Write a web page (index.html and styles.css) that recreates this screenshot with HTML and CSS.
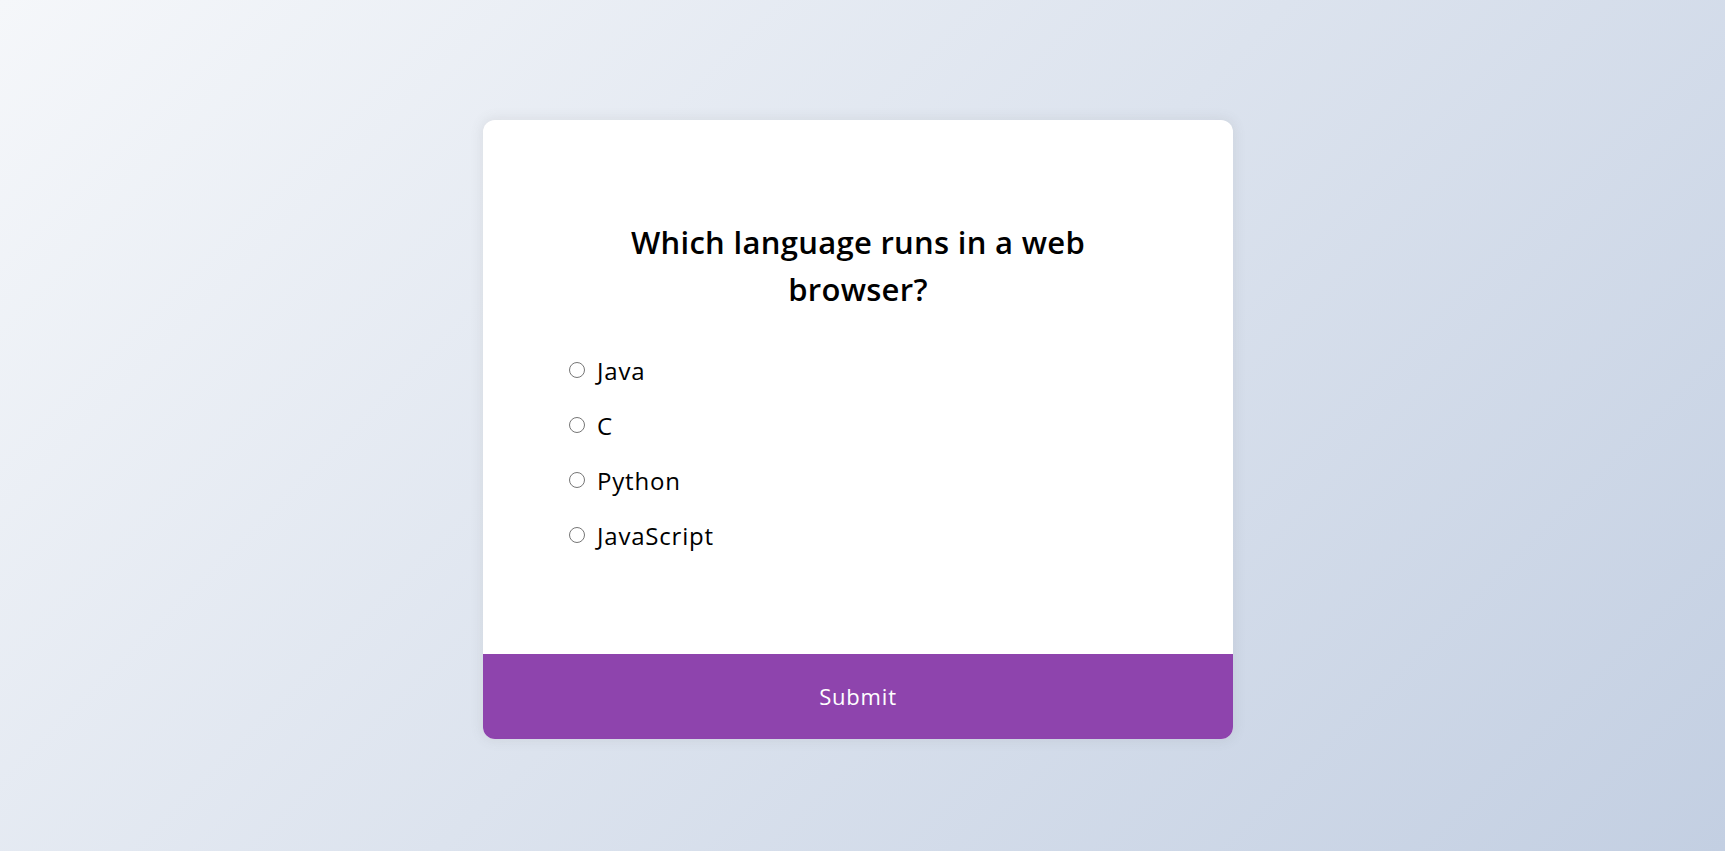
FILE: index.html
```html
<!DOCTYPE html>
<html lang="en">
<head>
<meta charset="utf-8">
<title>Quiz</title>
<link rel="stylesheet" href="styles.css">
</head>
<body>
  <div class="quiz-container">
    <div class="quiz-header">
      <h2 class="question">Which language runs in a web browser?</h2>
      <ul class="answers">
        <li class="answer"><input type="radio" name="answer" id="a" class="radio"><label for="a">Java</label></li>
        <li class="answer"><input type="radio" name="answer" id="b" class="radio"><label for="b">C</label></li>
        <li class="answer"><input type="radio" name="answer" id="c" class="radio"><label for="c">Python</label></li>
        <li class="answer"><input type="radio" name="answer" id="d" class="radio"><label for="d">JavaScript</label></li>
      </ul>
    </div>
    <button class="submit">Submit</button>
  </div>
</body>
</html>
```
FILE: styles.css
```css
* { box-sizing: border-box; }

html, body { height: 100%; }

body {
  margin: 0;
  font-family: "Open Sans", "Liberation Sans", sans-serif;
  background: linear-gradient(135deg, #f5f7fa 0%, #c3cfe2 100%);
  display: flex;
  align-items: center;
  justify-content: center;
  overflow: hidden;
}

.quiz-container {
  width: 750px;
  background: #fff;
  border-radius: 12px;
  box-shadow: 0 0 12px 2px rgba(100, 100, 100, 0.1);
  overflow: hidden;
  margin: 7px 0 0 -9px;
}

.quiz-header {
  padding: 79px 80px 80px;
}

.question {
  margin: 0;
  padding: 20px 60px;
  text-align: center;
  font-size: 31px;
  font-weight: 600;
  letter-spacing: 0.3px;
  line-height: 47px;
  color: #000;
}

.answers {
  list-style: none;
  margin: 20px 0 21px;
  padding: 0;
}

.answer {
  display: flex;
  align-items: center;
  font-size: 24px;
  line-height: 35px;
  letter-spacing: 0.8px;
  margin: 20px 0 0;
  color: #000;
}

.answer:first-child { margin-top: 0; }

.radio {
  appearance: none;
  -webkit-appearance: none;
  width: 16px;
  height: 16px;
  margin: 0 12px 0 6px;
  border: 1.3px solid #767676;
  border-radius: 50%;
  background: #fff;
  flex: none;
}

.radio:checked {
  border-color: #0075ff;
  box-shadow: inset 0 0 0 3px #fff;
  background: #0075ff;
}

.answer label { cursor: pointer; }

.submit {
  display: block;
  width: 100%;
  border: none;
  background: #8e44ad;
  color: #fff;
  font-family: inherit;
  font-size: 22px;
  letter-spacing: 0.8px;
  line-height: 33px;
  padding: 26px;
  cursor: pointer;
}
```
